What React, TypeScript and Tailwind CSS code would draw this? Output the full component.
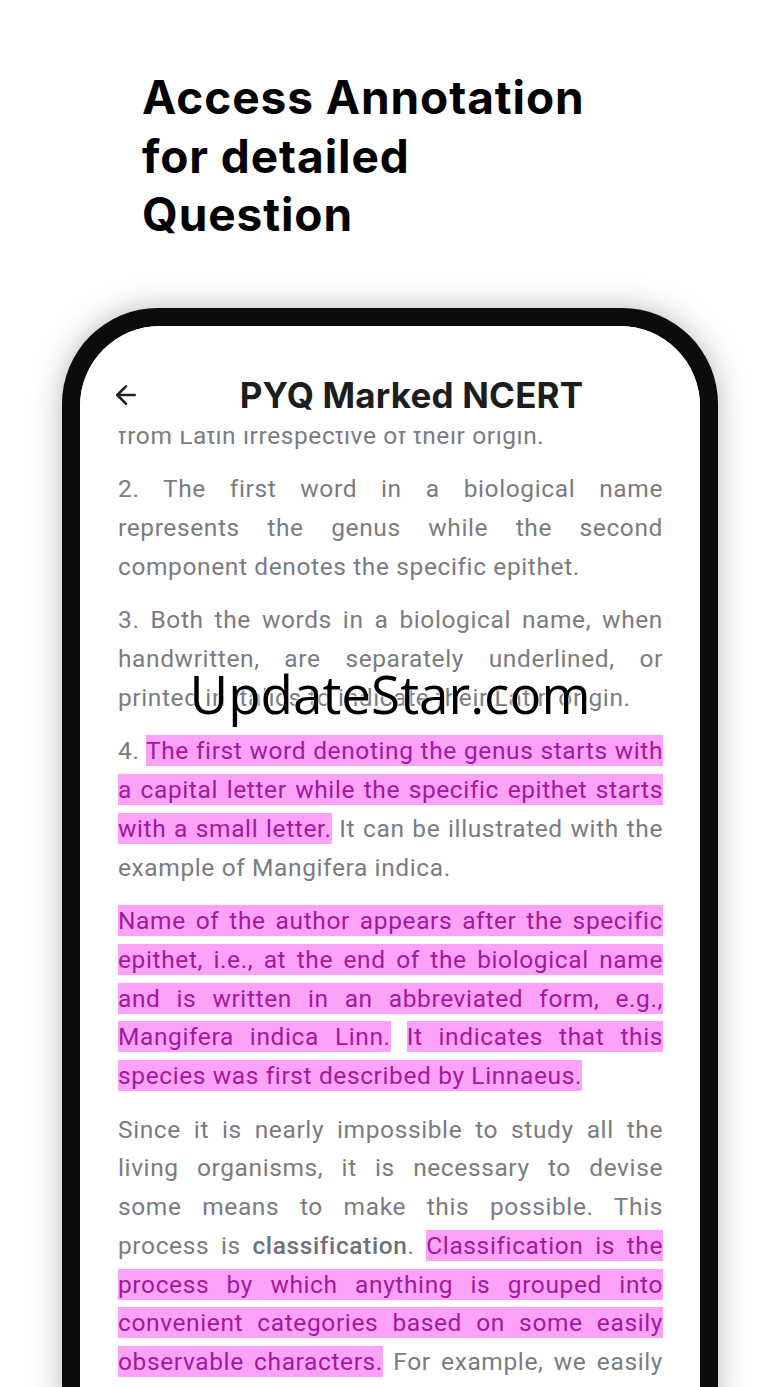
import React from 'react';
import { ArrowLeft } from 'lucide-react';

function Mark({ children }: { children: React.ReactNode }) {
  return (
    <span className="bg-[#fca2f8] text-[#a3189f] py-[1px] [box-decoration-break:clone]">
      {children}
    </span>
  );
}

export default function App() {
  return (
    <div className="relative h-[1387px] w-[780px] overflow-hidden bg-white">
      <div className="pt-[68px] pl-[142px] font-['Inter',sans-serif] text-[46px] font-bold leading-[58.5px] tracking-[0.02em] text-black">
        <div>Access Annotation</div>
        <div>for detailed</div>
        <div>Question</div>
      </div>

      <div className="ml-[62px] mt-[64px] w-[656px] h-[1100px] rounded-t-[96px] bg-[#0c0c0c] px-[18px] pt-[18px] shadow-[0_0_30px_rgba(0,0,0,0.28)]">
        <div className="h-full rounded-t-[80px] bg-white overflow-hidden">
          <div className="relative z-10 flex h-[105px] items-center bg-white pt-[34px] pl-[31px]">
            <ArrowLeft className="h-[30px] w-[30px] text-[#222]" strokeWidth={2} />
            <div className="flex-1 pr-[18px] text-center font-['Inter',sans-serif] text-[35px] font-bold tracking-[0.005em] text-[#1d1d1d]">
              PYQ Marked NCERT
            </div>
          </div>

          <div className="pl-[38px] pr-[37px] font-['Roboto',sans-serif] text-[24.5px] tracking-[0.025em] leading-[38.7px] text-[#7b7b82] text-justify">
            <p className="-mt-[14px]">from Latin irrespective of their origin.</p>
            <p className="mt-[15px]">
              2. The first word in a biological name represents the genus while the second component denotes the specific epithet.
            </p>
            <p className="mt-[15px]">
              3. Both the words in a biological name, when handwritten, are separately underlined, or printed in italics to indicate their Latin origin.
            </p>
            <p className="mt-[15px]">
              4.{' '}
              <Mark>The first word denoting the genus starts with a capital letter while the specific epithet starts with a small letter.</Mark>{' '}
              It can be illustrated with the example of Mangifera indica.
            </p>
            <p className="mt-[15px]">
              <Mark>
                Name of the author appears after the specific epithet, i.e., at the end of the biological name and is written in an abbreviated form, e.g., Mangifera indica Linn.
              </Mark>{' '}
              <Mark>It indicates that this species was first described by Linnaeus.</Mark>
            </p>
            <p className="mt-[15px]">
              Since it is nearly impossible to study all the living organisms, it is necessary to devise some means to make this possible. This process is{' '}
              <span className="font-medium text-[#707077]">classification</span>.{' '}
              <Mark>
                Classification is the process by which anything is grouped into convenient categories based on some easily observable characters.
              </Mark>{' '}
              For example, we easily recognise objects and even distinguish between them.
            </p>
          </div>
        </div>
      </div>

      <div className="pointer-events-none absolute left-0 top-[657px] w-[780px] text-center font-['Open_Sans',sans-serif] text-[53px] leading-[74px] text-black [text-shadow:0_0_2px_#fff,0_0_2px_#fff,0_0_3px_#fff]">
        UpdateStar.com
      </div>
    </div>
  );
}
